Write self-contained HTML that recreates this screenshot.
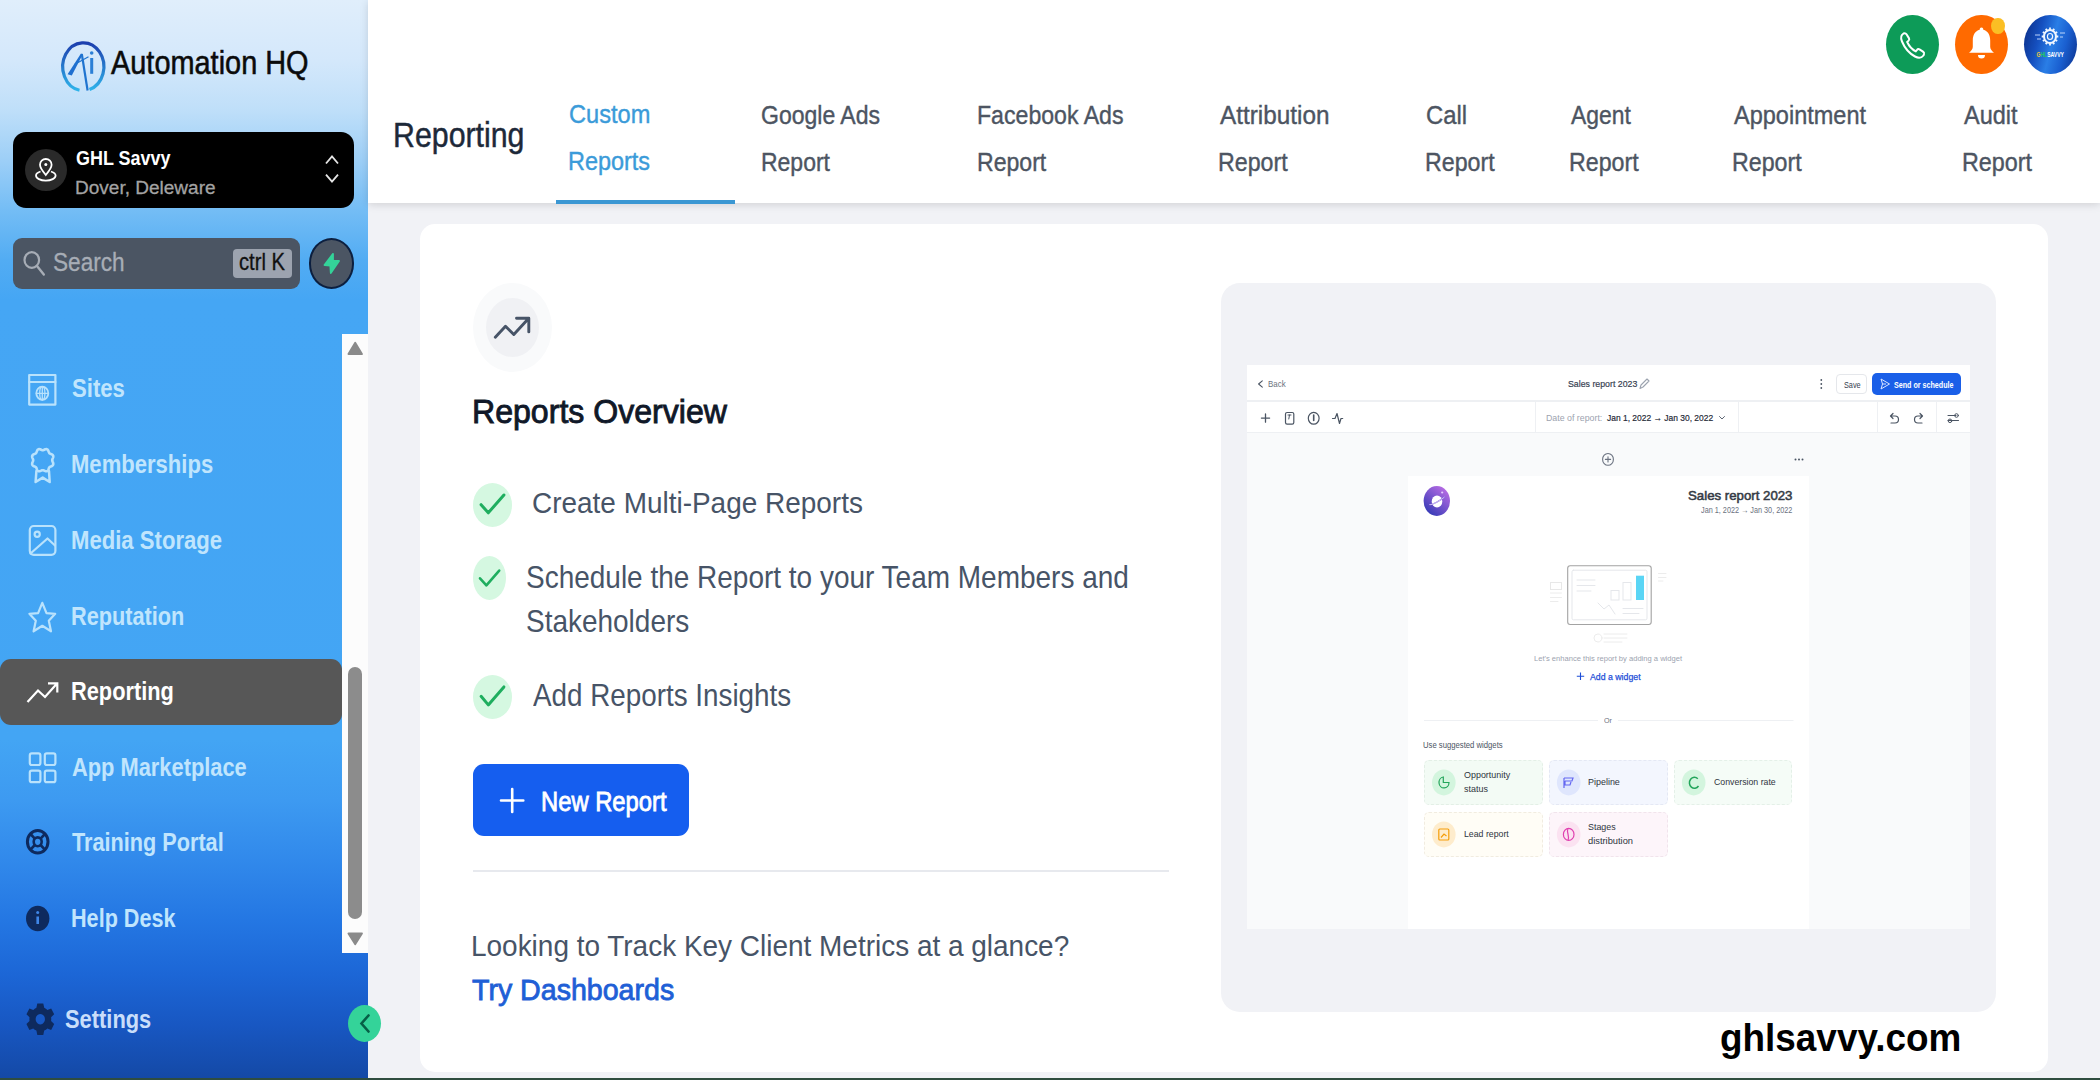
<!DOCTYPE html>
<html><head><meta charset="utf-8"><style>
*{margin:0;padding:0;box-sizing:border-box}
html,body{width:2100px;height:1080px;overflow:hidden;background:#f1f2f6;font-family:"Liberation Sans",sans-serif}
.a{position:absolute}
.t{position:absolute;white-space:nowrap;line-height:1;transform-origin:0 0}
svg{position:absolute;overflow:visible}
</style></head>
<body>
<!-- sidebar -->
<div class="a" style="left:0;top:0;width:368px;height:1078px;background:linear-gradient(180deg,#e0eefb 0px,#d4e8fb 60px,#bfdff9 110px,#9dcff7 160px,#74bdf5 210px,#52acf3 260px,#45a6f4 300px,#43a5f4 740px,#3d9af1 800px,#3189eb 860px,#2477e3 920px,#1c66d6 975px,#1857c2 1025px,#1449a6 1078px)"></div>
<div class="a" style="left:0;top:1078px;width:2100px;height:2px;background:#2f4d3f"></div>
<!-- header -->
<div class="a" style="left:368px;top:0;width:1732px;height:203px;background:#fff;box-shadow:0 2px 8px rgba(0,0,0,0.13)"></div>
<div class="a" style="left:556px;top:199.5px;width:179px;height:4px;background:#3b97d3"></div>
<!-- card -->
<div class="a" style="left:420px;top:224px;width:1628px;height:848px;background:#fff;border-radius:15px"></div>
<div class="a" style="left:1221px;top:283px;width:775px;height:729px;background:#f1f2f6;border-radius:19px"></div>
<!-- sidebar widgets -->
<div class="a" style="left:13px;top:132px;width:341px;height:75.5px;background:#000;border-radius:13px"></div>
<div class="a" style="left:25px;top:149px;width:42px;height:42px;background:#2a2a2a;border-radius:50%"></div>
<div class="a" style="left:13px;top:238px;width:287px;height:51px;background:#4b5563;border-radius:9px"></div>
<div class="a" style="left:233px;top:248.7px;width:59px;height:29.3px;background:#9ca3af;border-radius:4px"></div>
<div class="a" style="left:308.7px;top:238px;width:45.6px;height:50.7px;background:#4b5563;border:2px solid #0c1f3f;border-radius:50%"></div>
<div class="a" style="left:342px;top:334px;width:26px;height:618.6px;background:#fcfcfc"></div>
<div class="a" style="left:348px;top:666.5px;width:14px;height:252px;background:#8c8c8c;border-radius:7px"></div>
<div class="a" style="left:0;top:658.7px;width:342px;height:66px;background:#575757;border-radius:11px"></div>
<div class="a" style="left:347.6px;top:1005px;width:33.4px;height:37.3px;background:#34d399;border-radius:50%"></div>
<!-- header icons -->
<div class="a" style="left:1886.3px;top:15px;width:52.7px;height:59.3px;background:#0d9b58;border-radius:50%"></div>
<div class="a" style="left:1955.2px;top:15px;width:52.4px;height:59.3px;background:#ff6a00;border-radius:50%"></div>
<div class="a" style="left:2024.2px;top:15px;width:52.6px;height:59.3px;background:linear-gradient(105deg,#0a2a80 0%,#1550c0 30%,#2a7ee6 52%,#1a5fd0 72%,#0b2d86 100%);border-radius:50%"></div>
<div class="a" style="left:1991.4px;top:18px;width:13.4px;height:16px;background:#fbbf24;border-radius:50%"></div>
<!-- main left -->
<div class="a" style="left:472.8px;top:283px;width:78.8px;height:89px;background:#f9fafb;border-radius:50%"></div>
<div class="a" style="left:485.5px;top:298px;width:53px;height:59.3px;background:#f0f1f4;border-radius:50%"></div>
<div class="a" style="left:473px;top:483px;width:39px;height:44px;background:#d5f8e1;border-radius:50%"></div>
<div class="a" style="left:473.3px;top:556.4px;width:33.1px;height:43.9px;background:#d5f8e1;border-radius:50%"></div>
<div class="a" style="left:473.3px;top:674.7px;width:38.7px;height:43.9px;background:#d5f8e1;border-radius:50%"></div>
<div class="a" style="left:473px;top:763.5px;width:216.2px;height:72.8px;background:#155eef;border-radius:11px"></div>
<div class="a" style="left:473px;top:869.5px;width:695.6px;height:2px;background:#e7e9ee"></div>
<svg width="2100" height="1080" style="left:0;top:0" viewBox="0 0 2100 1080">
 <defs>
  <linearGradient id="lg" x1="0" y1="0" x2="0" y2="1"><stop offset="0" stop-color="#1d3fae"/><stop offset="1" stop-color="#2eb3ea"/></linearGradient>
 </defs>
 <!-- logo -->
 <path d="M 79.5 90.2 A 20.6 23.9 0 1 1 89.5 89.5" fill="none" stroke="url(#lg)" stroke-width="3.2"/>
 <path d="M 67.6 74.2 L 71.8 75.6 L 82.8 54.2 L 81 53.4 Z" fill="#1f6fd0"/>
 <path d="M 81.8 54 L 87.6 90.5" fill="none" stroke="#1f74d0" stroke-width="2.2"/>
 <path d="M 74.5 64.5 L 88.5 56.8" fill="none" stroke="#1f74d0" stroke-width="1.2"/>
 <rect x="90.2" y="58" width="3" height="15.8" fill="#2b7fd6"/>
 <circle cx="91.7" cy="53" r="1.8" fill="#2b7fd6"/>
 <!-- location pin -->
 <path d="M 45.8 175 C 42 170.5 40 167.5 40 164.8 A 5.8 5.8 0 0 1 51.6 164.8 C 51.6 167.5 49.6 170.5 45.8 175 Z" fill="none" stroke="#fff" stroke-width="1.8"/>
 <circle cx="45.8" cy="164.6" r="1.5" fill="#fff"/>
 <path d="M 40.5 171.5 C 37.5 172.5 36 174 36 175.5 C 36 178.3 40.4 180.6 45.8 180.6 C 51.2 180.6 55.6 178.3 55.6 175.5 C 55.6 174 54 172.5 51 171.5" fill="none" stroke="#fff" stroke-width="1.8"/>
 <!-- chevrons -->
 <path d="M 326 163.5 L 332 156.5 L 338 163.5" fill="none" stroke="#e5e5e5" stroke-width="1.8"/>
 <path d="M 326 174.7 L 332 181.7 L 338 174.7" fill="none" stroke="#e5e5e5" stroke-width="1.8"/>
 <!-- search -->
 <ellipse cx="31.8" cy="260" rx="7.3" ry="7.8" fill="none" stroke="#a7adb6" stroke-width="2.2"/>
 <path d="M 37 266 L 43.8 274.5" stroke="#a7adb6" stroke-width="2.4" stroke-linecap="round"/>
 <!-- bolt -->
 <path d="M 333 253.8 L 324.5 265 L 330.3 265.5 L 330.8 273 L 339 261 L 333 260.6 Z" fill="#34d399" stroke="#34d399" stroke-width="1.8" stroke-linejoin="round"/>
 <!-- scroll arrows -->
 <path d="M 348.6 354 L 355.2 343 L 361.8 354 Z" fill="#8a8a8a" stroke="#8a8a8a" stroke-width="2.2" stroke-linejoin="round"/>
 <path d="M 348.6 933.5 L 355.2 944 L 361.8 933.5 Z" fill="#8a8a8a" stroke="#8a8a8a" stroke-width="2.2" stroke-linejoin="round"/>
 <!-- collapse chevron -->
 <path d="M 368.5 1015.5 L 361.5 1023.5 L 368.5 1031.5" fill="none" stroke="#065f46" stroke-width="2.6" stroke-linecap="round"/>
</svg>
<svg width="2100" height="1080" style="left:0;top:0" viewBox="0 0 2100 1080">
 <g fill="none" stroke="#b9e2fc" stroke-width="2.2" stroke-linejoin="round" stroke-linecap="round">
  <!-- sites -->
  <rect x="29.2" y="375" width="26.2" height="29.6"/>
  <path d="M 29.2 382 L 55.4 382"/>
  <ellipse cx="42.3" cy="393.3" rx="6" ry="6.6" stroke-width="1.8"/>
  <path d="M 36.3 393.3 H 48.3 M 42.3 386.7 V 399.9" stroke-width="1.3"/>
  <ellipse cx="42.3" cy="393.3" rx="2.6" ry="6.6" stroke-width="1.3"/>
  <!-- memberships rosette -->
  <path d="M 42.70 450.23 L 43.08 450.19 L 43.46 450.08 L 43.86 449.92 L 44.28 449.72 L 44.73 449.51 L 45.19 449.32 L 45.66 449.19 L 46.13 449.12 L 46.59 449.15 L 47.02 449.27 L 47.41 449.50 L 47.75 449.82 L 48.04 450.21 L 48.28 450.66 L 48.48 451.14 L 48.65 451.61 L 48.82 452.07 L 48.99 452.48 L 49.19 452.84 L 49.43 453.15 L 49.72 453.40 L 50.06 453.61 L 50.46 453.79 L 50.89 453.96 L 51.35 454.14 L 51.80 454.36 L 52.23 454.61 L 52.60 454.91 L 52.91 455.27 L 53.13 455.67 L 53.25 456.12 L 53.27 456.60 L 53.21 457.09 L 53.08 457.59 L 52.90 458.07 L 52.70 458.54 L 52.51 458.98 L 52.35 459.40 L 52.25 459.81 L 52.22 460.20 L 52.25 460.59 L 52.35 461.00 L 52.51 461.42 L 52.70 461.86 L 52.90 462.33 L 53.08 462.81 L 53.21 463.31 L 53.27 463.80 L 53.25 464.28 L 53.13 464.73 L 52.91 465.13 L 52.60 465.49 L 52.23 465.79 L 51.80 466.04 L 51.35 466.26 L 50.89 466.44 L 50.46 466.61 L 50.06 466.79 L 49.72 467.00 L 49.43 467.25 L 49.19 467.56 L 48.99 467.92 L 48.82 468.33 L 48.65 468.79 L 48.48 469.26 L 48.28 469.74 L 48.04 470.19 L 47.75 470.58 L 47.41 470.90 L 47.02 471.13 L 46.59 471.25 L 46.13 471.28 L 45.66 471.21 L 45.19 471.08 L 44.73 470.89 L 44.28 470.68 L 43.86 470.48 L 43.46 470.32 L 43.08 470.21 L 42.70 470.17 L 42.32 470.21 L 41.94 470.32 L 41.54 470.48 L 41.12 470.68 L 40.67 470.89 L 40.21 471.08 L 39.74 471.21 L 39.27 471.28 L 38.81 471.25 L 38.38 471.13 L 37.99 470.90 L 37.65 470.58 L 37.36 470.19 L 37.12 469.74 L 36.92 469.26 L 36.75 468.79 L 36.58 468.33 L 36.41 467.92 L 36.21 467.56 L 35.97 467.25 L 35.68 467.00 L 35.34 466.79 L 34.94 466.61 L 34.51 466.44 L 34.05 466.26 L 33.60 466.04 L 33.17 465.79 L 32.80 465.49 L 32.49 465.13 L 32.27 464.73 L 32.15 464.28 L 32.13 463.80 L 32.19 463.31 L 32.32 462.81 L 32.50 462.33 L 32.70 461.86 L 32.89 461.42 L 33.05 461.00 L 33.15 460.59 L 33.18 460.20 L 33.15 459.81 L 33.05 459.40 L 32.89 458.98 L 32.70 458.54 L 32.50 458.07 L 32.32 457.59 L 32.19 457.09 L 32.13 456.60 L 32.15 456.12 L 32.27 455.67 L 32.49 455.27 L 32.80 454.91 L 33.17 454.61 L 33.60 454.36 L 34.05 454.14 L 34.51 453.96 L 34.94 453.79 L 35.34 453.61 L 35.68 453.40 L 35.97 453.15 L 36.21 452.84 L 36.41 452.48 L 36.58 452.07 L 36.75 451.61 L 36.92 451.14 L 37.12 450.66 L 37.36 450.21 L 37.65 449.82 L 37.99 449.50 L 38.38 449.27 L 38.81 449.15 L 39.27 449.12 L 39.74 449.19 L 40.21 449.32 L 40.67 449.51 L 41.12 449.72 L 41.54 449.92 L 41.94 450.08 L 42.32 450.19 L 42.70 450.23 Z" stroke-width="2.6"/>
  <path d="M 36.4 471 L 35.6 482 L 42.7 477.6 L 49.7 482 L 49 471" stroke-width="2.5"/>
  <!-- media -->
  <rect x="29.8" y="526" width="25.6" height="28.8" rx="4"/>
  <circle cx="37.2" cy="534.2" r="2.6"/>
  <path d="M 30.5 553.5 L 47.5 538.5 L 55 545.5"/>
  <!-- star -->
  <path d="M 42.3 602.8 L 46.5 613.2 L 55.2 613.8 L 48.8 620.8 L 51 631.3 L 42.3 625.8 L 33.6 631.3 L 35.8 620.8 L 29.4 613.8 L 38.1 613.2 Z"/>
  <!-- grid -->
  <rect x="29.8" y="753.4" width="10.6" height="11.6" rx="2"/>
  <rect x="44.8" y="753.4" width="10.6" height="11.6" rx="2"/>
  <rect x="29.8" y="770.6" width="10.6" height="11.6" rx="2"/>
  <rect x="44.8" y="770.6" width="10.6" height="11.6" rx="2"/>
 </g>
 <!-- trend (active) -->
 <path d="M 27.5 702 L 38 690.5 L 45 697 L 57 683.5 M 48 683.3 L 57.3 683.3 L 57.3 692.5" fill="none" stroke="#fff" stroke-width="2.2" stroke-linejoin="miter"/>
 <!-- lifebuoy -->
 <g fill="none" stroke="#0e2a5e">
  <ellipse cx="37.7" cy="841.8" rx="10.3" ry="11.3" stroke-width="3"/>
  <ellipse cx="37.7" cy="841.8" rx="4" ry="4.4" stroke-width="2.6"/>
  <path d="M 30.5 834 L 34.8 838.6 M 44.9 834 L 40.6 838.6 M 30.5 849.6 L 34.8 845 M 44.9 849.6 L 40.6 845" stroke-width="2.6"/>
 </g>
 <!-- info -->
 <ellipse cx="37.7" cy="918.5" rx="11.7" ry="12.8" fill="#0e2a5e"/>
 <rect x="36.4" y="916.5" width="2.6" height="7.5" fill="#3f86e8"/>
 <circle cx="37.7" cy="912.5" r="1.5" fill="#3f86e8"/>
 <!-- gear -->
 <g transform="translate(40.3 1019.2) scale(0.93 1.05)">
  <path fill="#0e2a5e" d="M -3.2 -15 L 3.2 -15 L 4.2 -10.8 A 11 11 0 0 1 7.6 -8.8 L 11.7 -10.2 L 14.9 -4.6 L 11.6 -1.8 A 11 11 0 0 1 11.6 1.8 L 14.9 4.6 L 11.7 10.2 L 7.6 8.8 A 11 11 0 0 1 4.2 10.8 L 3.2 15 L -3.2 15 L -4.2 10.8 A 11 11 0 0 1 -7.6 8.8 L -11.7 10.2 L -14.9 4.6 L -11.6 1.8 A 11 11 0 0 1 -11.6 -1.8 L -14.9 -4.6 L -11.7 -10.2 L -7.6 -8.8 A 11 11 0 0 1 -4.2 -10.8 Z M 0 -5 A 5 5 0 1 0 0.01 -5 Z"/>
 </g>
</svg>
<svg width="2100" height="1080" style="left:0;top:0" viewBox="0 0 2100 1080">
 <!-- phone -->
 <path d="M 1903.5 33.5 C 1901 35 1900.5 38 1902 41.5 C 1904.5 47.5 1909.5 53.5 1915 56.5 C 1918.5 58.5 1921.5 58 1923.5 55.5 L 1924 54 C 1924.3 53 1923.8 52.2 1923 51.6 L 1919.5 49.3 C 1918.6 48.8 1917.6 49 1917 49.8 L 1915.8 51.3 C 1912 49.5 1909 46 1907.2 42 L 1908.6 40.6 C 1909.3 39.9 1909.4 38.9 1908.9 38.1 L 1906.5 34.3 C 1905.9 33.4 1904.6 33 1903.5 33.5 Z" fill="none" stroke="#fff" stroke-width="2"/>
 <!-- bell -->
 <path d="M 1981.5 27.5 C 1980 27.5 1979.7 28.5 1979.7 29.8 C 1975 31 1972.8 35 1972.8 40.5 L 1972.8 47 C 1972.8 49.5 1970.5 51.5 1969 52.8 L 1994 52.8 C 1992.5 51.5 1990.2 49.5 1990.2 47 L 1990.2 40.5 C 1990.2 35 1988 31 1983.3 29.8 C 1983.3 28.5 1983 27.5 1981.5 27.5 Z" fill="#fff"/>
 <path d="M 1978 55 A 3.5 3.5 0 0 0 1985 55 Z" fill="#fff"/>
 <!-- ghl logo -->
 <g fill="none" stroke="#f0f6ff">
  <ellipse cx="2050" cy="36.5" rx="6" ry="6.6" stroke-width="2"/>
  <ellipse cx="2050" cy="36.5" rx="2.6" ry="3" stroke-width="1.2"/>
  <path d="M 2056.20 36.50 L 2058.30 36.50 M 2055.37 39.90 L 2057.19 41.00 M 2053.10 42.39 L 2054.15 44.29 M 2050.00 43.30 L 2050.00 45.50 M 2046.90 42.39 L 2045.85 44.29 M 2044.63 39.90 L 2042.81 41.00 M 2043.80 36.50 L 2041.70 36.50 M 2044.63 33.10 L 2042.81 32.00 M 2046.90 30.61 L 2045.85 28.71 M 2050.00 29.70 L 2050.00 27.50 M 2053.10 30.61 L 2054.15 28.71 M 2055.37 33.10 L 2057.19 32.00 " stroke-width="1.8"/>
  <path d="M 2035 35 H 2040 M 2037 39 H 2041 M 2060 33 H 2065 M 2060 37 H 2063" stroke-width="0.9" stroke="#cfe0ff"/>
 </g>
 <text x="2036.5" y="57" font-family="Liberation Sans" font-weight="700" font-size="7.5" fill="#fff" textLength="27.5" lengthAdjust="spacingAndGlyphs"><tspan fill="#e8c53a">G</tspan><tspan fill="#22c55e">HL</tspan>SAVVY</text>
 <!-- main trend icon -->
 <path d="M 495.3 337.2 L 505.5 326.2 L 513.8 334.5 L 528.3 318.7 M 516.5 318.3 H 528.8 V 331.9" fill="none" stroke="#475467" stroke-width="2.9" stroke-linecap="round" stroke-linejoin="round"/>
 <!-- checks -->
 <path d="M 481.1 504.7 L 488.3 512.8 L 503.9 495" fill="none" stroke="#1fae5f" stroke-width="3" stroke-linecap="round" stroke-linejoin="round"/>
 <path d="M 480 578.3 L 486.4 585.3 L 499.2 570.6" fill="none" stroke="#1fae5f" stroke-width="2.6" stroke-linecap="round" stroke-linejoin="round"/>
 <path d="M 481.1 696.3 L 488.3 704.9 L 503.9 686.9" fill="none" stroke="#1fae5f" stroke-width="3" stroke-linecap="round" stroke-linejoin="round"/>
 <!-- plus -->
 <path d="M 512.2 789 V 812 M 501 800.5 H 523.3" stroke="#fff" stroke-width="2.6" stroke-linecap="round"/>
</svg>
<!-- PREVIEW END -->

<div class="t" style="left:111.40px;top:46.74px;font-size:32.56px;transform:scaleX(0.8880);color:#0b0b0b;-webkit-text-stroke:0.55px #0b0b0b;">Automation HQ</div>
<div class="t" style="left:75.98px;top:148.45px;font-size:20.49px;transform:scaleX(0.8767);color:#ffffff;font-weight:700;">GHL Savvy</div>
<div class="t" style="left:75.18px;top:177.76px;font-size:19.19px;transform:scaleX(0.9908);color:#a3a3a3;-webkit-text-stroke:0.3px #a3a3a3;">Dover, Deleware</div>
<div class="t" style="left:53.18px;top:250.41px;font-size:25.15px;transform:scaleX(0.8995);color:#a7adb6;-webkit-text-stroke:0.3px #a7adb6;">Search</div>
<div class="t" style="left:239.19px;top:250.74px;font-size:23.69px;transform:scaleX(0.8537);color:#111111;-webkit-text-stroke:0.3px #111;">ctrl K</div>
<div class="t" style="left:71.84px;top:375.31px;font-size:26.45px;transform:scaleX(0.8375);color:#c0e5fd;font-weight:700;">Sites</div>
<div class="t" style="left:71.07px;top:451.31px;font-size:26.45px;transform:scaleX(0.8342);color:#c0e5fd;font-weight:700;">Memberships</div>
<div class="t" style="left:71.06px;top:526.61px;font-size:26.45px;transform:scaleX(0.8363);color:#c0e5fd;font-weight:700;">Media Storage</div>
<div class="t" style="left:71.09px;top:602.61px;font-size:26.45px;transform:scaleX(0.8213);color:#c0e5fd;font-weight:700;">Reputation</div>
<div class="t" style="left:71.95px;top:754.01px;font-size:26.45px;transform:scaleX(0.8260);color:#c0e5fd;font-weight:700;">App Marketplace</div>
<div class="t" style="left:72.28px;top:829.01px;font-size:26.45px;transform:scaleX(0.8194);color:#c0e5fd;font-weight:700;">Training Portal</div>
<div class="t" style="left:71.09px;top:905.31px;font-size:26.45px;transform:scaleX(0.8179);color:#c0e5fd;font-weight:700;">Help Desk</div>
<div class="t" style="left:70.98px;top:677.81px;font-size:26.45px;transform:scaleX(0.8244);color:#ffffff;font-weight:700;">Reporting</div>
<div class="t" style="left:65.04px;top:1006.21px;font-size:26.45px;transform:scaleX(0.8273);color:#c9defa;font-weight:700;">Settings</div>
<div class="t" style="left:392.57px;top:117.74px;font-size:34.45px;transform:scaleX(0.8806);color:#1d2939;-webkit-text-stroke:0.45px #1d2939;">Reporting</div>
<div class="t" style="left:568.82px;top:100.95px;font-size:26.16px;transform:scaleX(0.9022);color:#3b9bd9;-webkit-text-stroke:0.4px #3b9bd9;">Custom</div>
<div class="t" style="left:568.13px;top:148.84px;font-size:25.00px;transform:scaleX(0.9371);color:#3b9bd9;-webkit-text-stroke:0.4px #3b9bd9;">Reports</div>
<div class="t" style="left:761.35px;top:102.08px;font-size:26.60px;transform:scaleX(0.8658);color:#4d5562;-webkit-text-stroke:0.4px #4d5562;">Google Ads</div>
<div class="t" style="left:760.66px;top:149.59px;font-size:25.29px;transform:scaleX(0.9088);color:#4d5562;-webkit-text-stroke:0.4px #4d5562;">Report</div>
<div class="t" style="left:977.15px;top:102.08px;font-size:26.60px;transform:scaleX(0.8691);color:#4d5562;-webkit-text-stroke:0.4px #4d5562;">Facebook Ads</div>
<div class="t" style="left:977.15px;top:149.59px;font-size:25.29px;transform:scaleX(0.9129);color:#4d5562;-webkit-text-stroke:0.4px #4d5562;">Report</div>
<div class="t" style="left:1219.70px;top:102.08px;font-size:26.60px;transform:scaleX(0.9138);color:#4d5562;-webkit-text-stroke:0.4px #4d5562;">Attribution</div>
<div class="t" style="left:1217.84px;top:149.59px;font-size:25.29px;transform:scaleX(0.9183);color:#4d5562;-webkit-text-stroke:0.4px #4d5562;">Report</div>
<div class="t" style="left:1425.81px;top:102.08px;font-size:26.60px;transform:scaleX(0.8971);color:#4d5562;-webkit-text-stroke:0.4px #4d5562;">Call</div>
<div class="t" style="left:1425.14px;top:149.59px;font-size:25.29px;transform:scaleX(0.9183);color:#4d5562;-webkit-text-stroke:0.4px #4d5562;">Report</div>
<div class="t" style="left:1570.70px;top:102.08px;font-size:26.60px;transform:scaleX(0.8602);color:#4d5562;-webkit-text-stroke:0.4px #4d5562;">Agent</div>
<div class="t" style="left:1568.84px;top:149.59px;font-size:25.29px;transform:scaleX(0.9183);color:#4d5562;-webkit-text-stroke:0.4px #4d5562;">Report</div>
<div class="t" style="left:1734.30px;top:102.08px;font-size:26.60px;transform:scaleX(0.8841);color:#4d5562;-webkit-text-stroke:0.4px #4d5562;">Appointment</div>
<div class="t" style="left:1732.44px;top:149.59px;font-size:25.29px;transform:scaleX(0.9183);color:#4d5562;-webkit-text-stroke:0.4px #4d5562;">Report</div>
<div class="t" style="left:1963.80px;top:102.08px;font-size:26.60px;transform:scaleX(0.8828);color:#4d5562;-webkit-text-stroke:0.4px #4d5562;">Audit</div>
<div class="t" style="left:1961.93px;top:149.59px;font-size:25.29px;transform:scaleX(0.9224);color:#4d5562;-webkit-text-stroke:0.4px #4d5562;">Report</div>
<div class="t" style="left:471.83px;top:394.70px;font-size:33.43px;transform:scaleX(0.9601);color:#101828;-webkit-text-stroke:0.9px #101828;">Reports Overview</div>
<div class="t" style="left:531.60px;top:488.25px;font-size:29.94px;transform:scaleX(0.9336);color:#475467;">Create Multi-Page Reports</div>
<div class="t" style="left:526.04px;top:561.97px;font-size:31.10px;transform:scaleX(0.8997);color:#475467;">Schedule the Report to your Team Members and</div>
<div class="t" style="left:526.04px;top:605.97px;font-size:31.10px;transform:scaleX(0.8994);color:#475467;">Stakeholders</div>
<div class="t" style="left:532.70px;top:680.37px;font-size:31.10px;transform:scaleX(0.8943);color:#475467;">Add Reports Insights</div>
<div class="t" style="left:540.70px;top:788.29px;font-size:27.18px;transform:scaleX(0.8748);color:#ffffff;-webkit-text-stroke:0.8px #ffffff;">New Report</div>
<div class="t" style="left:470.76px;top:931.13px;font-size:30.09px;transform:scaleX(0.9294);color:#475467;">Looking to Track Key Client Metrics at a glance?</div>
<div class="t" style="left:472.43px;top:974.93px;font-size:30.09px;transform:scaleX(0.9498);color:#1f5fd6;-webkit-text-stroke:0.85px #1f5fd6;">Try Dashboards</div>
<div class="t" style="left:1719.92px;top:1018.37px;font-size:39.02px;transform:scaleX(0.9456);color:#000000;font-weight:700;">ghlsavvy.com</div>
<div class="a" style="left:0;top:0;width:2100px;height:1080px">
<!-- PREVIEW START -->
<!-- preview inner -->
<div class="a" style="left:1247px;top:365px;width:722.5px;height:563.6px;background:#f9fafb"></div>
<div class="a" style="left:1247px;top:365px;width:722.5px;height:35px;background:#fff"></div>
<div class="a" style="left:1247px;top:400px;width:722.5px;height:2px;background:#eef0f3"></div>
<div class="a" style="left:1247px;top:402px;width:722.5px;height:31px;background:#fff;border-bottom:1px solid #eef0f3"></div>
<div class="a" style="left:1535px;top:402px;width:1px;height:31px;background:#eef0f3"></div>
<div class="a" style="left:1738px;top:402px;width:1px;height:31px;background:#eef0f3"></div>
<div class="a" style="left:1877px;top:402px;width:1px;height:31px;background:#eef0f3"></div>
<div class="a" style="left:1936px;top:402px;width:1px;height:31px;background:#eef0f3"></div>
<div class="a" style="left:1408px;top:475.6px;width:401px;height:453px;background:#fff"></div>
<div class="a" style="left:1872.4px;top:373px;width:88.6px;height:21.8px;background:#1a5fe8;border-radius:5px"></div>
<div class="a" style="left:1835.7px;top:373.6px;width:31.7px;height:20.8px;background:#fff;border:1px solid #e5e7eb;border-radius:4px"></div>
<!-- preview cards -->
<div class="a" style="left:1424.3px;top:759.7px;width:118.5px;height:45.5px;background:#f3fbf5;border:1px dashed #e3efe6;border-radius:5px"></div>
<div class="a" style="left:1549px;top:759.7px;width:118.9px;height:45.5px;background:#f3f6fe;border:1px dashed #e4e8f4;border-radius:5px"></div>
<div class="a" style="left:1673.7px;top:759.7px;width:118.6px;height:45.5px;background:#f5fcf7;border:1px dashed #e4f0e8;border-radius:5px"></div>
<div class="a" style="left:1424.3px;top:811.7px;width:118.5px;height:45.5px;background:#fffdf6;border:1px dashed #f1ece0;border-radius:5px"></div>
<div class="a" style="left:1549px;top:811.7px;width:118.9px;height:45.5px;background:#fdf5fa;border:1px dashed #f1e4ec;border-radius:5px"></div>
<svg width="2100" height="1080" style="left:0;top:0" viewBox="0 0 2100 1080">
 <defs>
  <linearGradient id="pg" x1="0.8" y1="0.1" x2="0.2" y2="0.9"><stop offset="0" stop-color="#b36ae2"/><stop offset="1" stop-color="#3a3cb8"/></linearGradient>
 </defs>
 <g fill="none" stroke="#4b5563" stroke-width="1.1" stroke-linecap="round" stroke-linejoin="round">
  <path d="M 1262.3 380.8 L 1258.6 384 L 1262.3 387.2"/>
  <path d="M 1640 388.5 L 1641 385 L 1647 379 L 1649 381 L 1643 387 Z" stroke="#9ca3af"/>
  <path d="M 1265.5 414 V 422.2 M 1261.4 418.1 H 1269.6" stroke-width="1.3"/>
  <rect x="1285.5" y="412.5" width="8.3" height="11.6" rx="1.6" stroke-width="1.2"/>
  <path d="M 1288 415 H 1291 M 1289.5 415 L 1288.8 419" stroke-width="1"/>
  <ellipse cx="1313.7" cy="418.3" rx="5.4" ry="5.9" stroke-width="1.2"/>
  <path d="M 1313.7 415 V 420.5" stroke-width="1.6"/>
  <path d="M 1332.5 418.5 H 1335 L 1337 413.5 L 1339.5 423.5 L 1341 418.5 H 1342.7" stroke-width="1.2"/>
  <path d="M 1719.5 416.5 L 1722 419 L 1724.5 416.5" stroke-width="0.9"/>
  <path d="M 1890.5 416 L 1893 413.5 M 1890.5 416 L 1893 418.5 M 1890.5 416 H 1895 A 3.5 3.5 0 0 1 1895 423 H 1891" stroke-width="1.2"/>
  <path d="M 1922.5 416 L 1920 413.5 M 1922.5 416 L 1920 418.5 M 1922.5 416 H 1918 A 3.5 3.5 0 0 0 1918 423 H 1922" stroke-width="1.2"/>
  <path d="M 1948 415.5 H 1956 M 1948 420.5 H 1958.5" stroke-width="1.1"/>
  <circle cx="1956.5" cy="415.5" r="1.8" stroke-width="1"/>
  <circle cx="1950" cy="420.8" r="1.8" stroke-width="1"/>
  <ellipse cx="1608" cy="459.4" rx="5.4" ry="5.9" stroke="#6b7280" stroke-width="1.1"/>
  <path d="M 1608 456.8 V 462 M 1605.4 459.4 H 1610.6" stroke="#6b7280" stroke-width="1.1"/>
 </g>
 <circle cx="1821.3" cy="380" r="0.9" fill="#4b5563"/><circle cx="1821.3" cy="384" r="0.9" fill="#4b5563"/><circle cx="1821.3" cy="388" r="0.9" fill="#4b5563"/>
 <circle cx="1795.5" cy="459.4" r="1" fill="#4b5563"/><circle cx="1799" cy="459.4" r="1" fill="#4b5563"/><circle cx="1802.5" cy="459.4" r="1" fill="#4b5563"/>
 <path d="M 1881 379 L 1889.5 384 L 1881 389 L 1882.5 384 Z M 1882.5 384 H 1886" fill="none" stroke="#dbe6ff" stroke-width="1" stroke-linejoin="round"/>
 <!-- purple logo -->
 <ellipse cx="1436.8" cy="501" rx="13.2" ry="14.9" fill="url(#pg)"/>
 <ellipse cx="1437" cy="501.5" rx="5.3" ry="6" fill="#fff"/>
 <path d="M 1429.5 504.5 C 1432 505.5 1441 500 1444.5 497" fill="none" stroke="#7c5ad6" stroke-width="1.4"/>
 <path d="M 1429.5 504.5 C 1432 505.5 1441 500 1444.5 497" fill="none" stroke="#e5dcff" stroke-width="0.8"/>
 <circle cx="1442.2" cy="492.5" r="1.1" fill="#e6c8ff"/>
 <!-- illustration -->
 <g fill="none" stroke-linecap="round">
  <rect x="1567.7" y="565.8" width="83.5" height="58.7" rx="2.5" stroke="#a3a3a3" stroke-width="1.1"/>
  <rect x="1572" y="570.2" width="75" height="49.6" rx="1.5" stroke="#e5e7eb" stroke-width="1"/>
  <path d="M 1577 580 H 1595 M 1577 585.5 H 1595 M 1577 591 H 1591" stroke="#e5e7eb" stroke-width="1"/>
  <rect x="1611" y="590.5" width="8" height="9.5" stroke="#e5e7eb" stroke-width="1"/>
  <rect x="1623" y="582.5" width="8" height="17.5" stroke="#e5e7eb" stroke-width="1"/>
  <path d="M 1598 603 L 1604 609 L 1609 605 L 1615 614" stroke="#e5e7eb" stroke-width="1"/>
  <path d="M 1623 608.5 H 1643 M 1623 613.5 H 1639" stroke="#e5e7eb" stroke-width="1"/>
  <rect x="1550.5" y="582.5" width="11" height="7" stroke="#e8e8e8" stroke-width="1"/>
  <path d="M 1550.5 593 H 1561.5 M 1550.5 597.5 H 1561.5 M 1550.5 601.5 H 1558" stroke="#ececec" stroke-width="1"/>
  <path d="M 1658.5 573.5 H 1666 M 1658.5 577.5 H 1666 M 1658.5 581 H 1663" stroke="#ececec" stroke-width="1"/>
  <circle cx="1598" cy="638" r="4" stroke="#ececec" stroke-width="1"/>
  <path d="M 1604 634 H 1627 M 1604 638 H 1627 M 1604 642 H 1622" stroke="#ececec" stroke-width="1"/>
 </g>
 <rect x="1636" y="575.7" width="8" height="24.3" fill="#5ad5f5"/>
 <path d="M 1580.5 672.5 V 680 M 1576.8 676.2 H 1584.2" stroke="#1d4ed8" stroke-width="1.1"/>
 <path d="M 1424 720.5 H 1598 M 1618 720.5 H 1793.5" stroke="#eef0f3" stroke-width="1"/>
 <!-- widget icons -->
 <ellipse cx="1443.8" cy="782.4" rx="11.8" ry="13" fill="#d3f5de"/>
 <ellipse cx="1568.7" cy="782.4" rx="11.8" ry="13" fill="#dfe6fd"/>
 <ellipse cx="1693.7" cy="782.4" rx="11.8" ry="13" fill="#d3f5de"/>
 <ellipse cx="1443.8" cy="834.4" rx="11.8" ry="13" fill="#feeccc"/>
 <ellipse cx="1568.7" cy="834.4" rx="11.8" ry="13" fill="#fbe2f1"/>
 <g fill="none" stroke-width="1.2">
  <path d="M 1443.3 777 A 5 5.5 0 1 0 1449 782.5 H 1443.3 Z" stroke="#22a55a"/>
  <path d="M 1564 778 H 1573 L 1572 781 H 1565 M 1564 778 V 788 M 1565 781 V 785 H 1570 L 1571 782" stroke="#6366f1"/>
  <path d="M 1697.8 778.8 A 5 5.5 0 1 0 1698.5 786" stroke="#22a55a" stroke-width="1.5"/>
  <rect x="1438.8" y="829" width="10" height="11" rx="1" stroke="#f59e0b"/>
  <path d="M 1441 837.5 L 1444 834 L 1446.5 836" stroke="#f59e0b"/>
  <ellipse cx="1568.7" cy="834.4" rx="5.3" ry="6" stroke="#e040b0"/>
  <path d="M 1568 828.5 C 1566 832 1570 836 1568 840.3" stroke="#e040b0"/>
 </g>
</svg>


<div class="t" style="left:1268.37px;top:379.75px;font-size:9.16px;transform:scaleX(0.8655);color:#6b7280;">Back</div>
<div class="t" style="left:1567.60px;top:379.03px;font-size:9.88px;transform:scaleX(0.8887);color:#374151;-webkit-text-stroke:0.2px #374151;">Sales report 2023</div>
<div class="t" style="left:1843.67px;top:380.62px;font-size:8.72px;transform:scaleX(0.8377);color:#374151;">Save</div>
<div class="t" style="left:1893.79px;top:380.62px;font-size:8.72px;transform:scaleX(0.8181);color:#ffffff;font-weight:700;">Send or schedule</div>
<div class="t" style="left:1546.20px;top:413.33px;font-size:9.88px;transform:scaleX(0.8914);color:#9ca3af;">Date of report:</div>
<div class="t" style="left:1606.77px;top:413.33px;font-size:9.88px;transform:scaleX(0.8555);color:#1f2937;-webkit-text-stroke:0.2px #1f2937;">Jan 1, 2022 → Jan 30, 2022</div>
<div class="t" style="left:1688.40px;top:488.83px;font-size:13.66px;transform:scaleX(0.9690);color:#343a44;-webkit-text-stroke:0.55px #343a44;">Sales report 2023</div>
<div class="t" style="left:1700.89px;top:506.46px;font-size:8.43px;transform:scaleX(0.8636);color:#6b7280;">Jan 1, 2022 → Jan 30, 2022</div>
<div class="t" style="left:1533.99px;top:655.40px;font-size:7.56px;transform:scaleX(1.0040);color:#9ca3af;">Let's enhance this report by adding a widget</div>
<div class="t" style="left:1590.00px;top:671.90px;font-size:9.45px;transform:scaleX(0.9274);color:#1d4ed8;-webkit-text-stroke:0.25px #1d4ed8;">Add a widget</div>
<div class="t" style="left:1604.18px;top:716.53px;font-size:7.99px;transform:scaleX(0.8935);color:#6b7280;">Or</div>
<div class="t" style="left:1423.32px;top:740.82px;font-size:8.72px;transform:scaleX(0.8833);color:#4b5563;">Use suggested widgets</div>
<div class="t" style="left:1463.80px;top:771.45px;font-size:9.16px;transform:scaleX(0.9759);color:#2f3540;">Opportunity</div>
<div class="t" style="left:1463.93px;top:785.05px;font-size:9.16px;transform:scaleX(0.9768);color:#2f3540;">status</div>
<div class="t" style="left:1587.88px;top:777.95px;font-size:9.16px;transform:scaleX(0.9774);color:#2f3540;">Pipeline</div>
<div class="t" style="left:1713.56px;top:777.95px;font-size:9.16px;transform:scaleX(0.9549);color:#2f3540;">Conversion rate</div>
<div class="t" style="left:1463.50px;top:829.95px;font-size:9.16px;transform:scaleX(0.9562);color:#2f3540;">Lead report</div>
<div class="t" style="left:1588.20px;top:823.45px;font-size:9.16px;transform:scaleX(0.9715);color:#2f3540;">Stages</div>
<div class="t" style="left:1588.23px;top:837.05px;font-size:9.16px;transform:scaleX(1.0159);color:#2f3540;">distribution</div>
</div>
</body></html>
